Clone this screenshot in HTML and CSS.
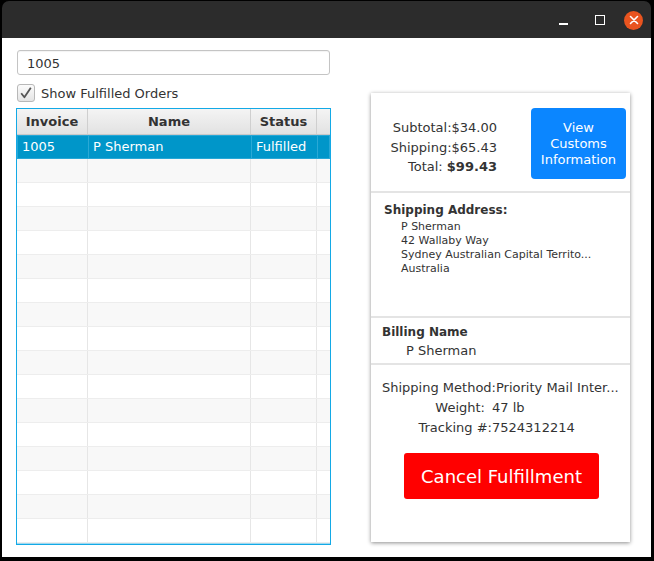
FILE: index.html
```html
<!DOCTYPE html>
<html>
<head>
<meta charset="utf-8">
<link rel="stylesheet" href="styles.css">
</head>
<body>
<div class="window">
  <div class="titlebar">
    <span class="ctl-min"></span>
    <span class="ctl-max"></span>
    <span class="ctl-close">
      <svg width="10" height="10" viewBox="0 0 10 10"><path d="M1.5 1.5L8.5 8.5M8.5 1.5L1.5 8.5" stroke="#fff" stroke-width="1.6" stroke-linecap="round"/></svg>
    </span>
  </div>
  <div class="content">
    <div class="left">
      <div class="search">1005</div>
      <div class="check-row">
        <span class="checkbox">
          <svg width="16" height="16" viewBox="0 0 16 16"><path d="M3.2 8.2L6.4 12.2L12.8 2.8" fill="none" stroke="#555" stroke-width="1.8" stroke-linejoin="round"/></svg>
        </span>
        <span class="check-label">Show Fulfilled Orders</span>
      </div>
      <div class="table">
        <div class="thead">
          <div class="th c1">Invoice</div>
          <div class="th c2">Name</div>
          <div class="th c3">Status</div>
          <div class="th c4"></div>
        </div>
        <div class="tbody">
          <div class="tr selected"><div class="td c1">1005</div><div class="td c2">P Sherman</div><div class="td c3">Fulfilled</div><div class="td c4"></div></div>
          <div class="tr odd"><div class="td c1"></div><div class="td c2"></div><div class="td c3"></div><div class="td c4"></div></div>
          <div class="tr"><div class="td c1"></div><div class="td c2"></div><div class="td c3"></div><div class="td c4"></div></div>
          <div class="tr odd"><div class="td c1"></div><div class="td c2"></div><div class="td c3"></div><div class="td c4"></div></div>
          <div class="tr"><div class="td c1"></div><div class="td c2"></div><div class="td c3"></div><div class="td c4"></div></div>
          <div class="tr odd"><div class="td c1"></div><div class="td c2"></div><div class="td c3"></div><div class="td c4"></div></div>
          <div class="tr"><div class="td c1"></div><div class="td c2"></div><div class="td c3"></div><div class="td c4"></div></div>
          <div class="tr odd"><div class="td c1"></div><div class="td c2"></div><div class="td c3"></div><div class="td c4"></div></div>
          <div class="tr"><div class="td c1"></div><div class="td c2"></div><div class="td c3"></div><div class="td c4"></div></div>
          <div class="tr odd"><div class="td c1"></div><div class="td c2"></div><div class="td c3"></div><div class="td c4"></div></div>
          <div class="tr"><div class="td c1"></div><div class="td c2"></div><div class="td c3"></div><div class="td c4"></div></div>
          <div class="tr odd"><div class="td c1"></div><div class="td c2"></div><div class="td c3"></div><div class="td c4"></div></div>
          <div class="tr"><div class="td c1"></div><div class="td c2"></div><div class="td c3"></div><div class="td c4"></div></div>
          <div class="tr odd"><div class="td c1"></div><div class="td c2"></div><div class="td c3"></div><div class="td c4"></div></div>
          <div class="tr"><div class="td c1"></div><div class="td c2"></div><div class="td c3"></div><div class="td c4"></div></div>
          <div class="tr odd"><div class="td c1"></div><div class="td c2"></div><div class="td c3"></div><div class="td c4"></div></div>
          <div class="tr"><div class="td c1"></div><div class="td c2"></div><div class="td c3"></div><div class="td c4"></div></div>
        </div>
      </div>
    </div>
    <div class="card">
      <div class="sec sec-totals">
        <div class="totals">
          <div>Subtotal:$34.00</div>
          <div>Shipping:$65.43</div>
          <div>Total: <b>$99.43</b></div>
        </div>
        <div class="btn-customs">View<br>Customs<br>Information</div>
      </div>
      <div class="sec sec-address">
        <div class="sec-title">Shipping Address:</div>
        <div class="address">
          <div>P Sherman</div>
          <div>42 Wallaby Way</div>
          <div>Sydney Australian Capital Territo...</div>
          <div>Australia</div>
        </div>
      </div>
      <div class="sec sec-billing">
        <div class="sec-title">Billing Name</div>
        <div class="billing-name">P Sherman</div>
      </div>
      <div class="sec sec-meta">
        <div class="meta-row"><span class="m-label m-ship">Shipping Method:</span><span class="m-value">Priority Mail Inter...</span></div>
        <div class="meta-row"><span class="m-label m-weight">Weight:</span><span class="m-value m-weight-v">47 lb</span></div>
        <div class="meta-row"><span class="m-label m-track">Tracking #:</span><span class="m-value m-track-v">7524312214</span></div>
        <div class="btn-cancel">Cancel Fulfillment</div>
      </div>
    </div>
  </div>
</div>
</body>
</html>
```
FILE: styles.css
```css
* { box-sizing: border-box; }
html, body { margin: 0; padding: 0; background: #000; }
body { font-family: "DejaVu Sans", "Liberation Sans", sans-serif; font-size: 13px; color: #333; }

.window {
  width: 654px; height: 561px;
  background: #000;
  padding: 1px 3px 4px 2px;
  display: flex; flex-direction: column;
}
.titlebar {
  height: 37px; flex: none;
  background: #2c2c2c;
  border-radius: 7px 7px 0 0;
  display: flex; align-items: center; justify-content: flex-end;
  padding-right: 8px;
}
.ctl-min { width: 9px; height: 2px; background: #fff; margin-top: 9px; margin-right: 27px; }
.ctl-max { width: 10px; height: 10px; border: 1.5px solid #fff; margin-right: 19px; margin-top: 1px; }
.ctl-close {
  width: 19px; height: 19px; border-radius: 50%;
  background: #e9541f;
  display: flex; align-items: center; justify-content: center;
  margin-top: 1px;
}
.ctl-close svg { display: block; }

.content {
  flex: 1;
  background: #fff;
  display: flex; align-items: flex-start;
  padding: 12px 21px 0 14px;
}
.left { width: 315px; flex: none; }
.search {
  margin-left: 1px; width: 313px; height: 25px;
  border: 1px solid #c4c4c4; border-radius: 3px;
  box-shadow: inset 0 1px 1px rgba(0,0,0,0.05);
  padding: 1px 0 0 9px; line-height: 23px; font-size: 13px; color: #333;
}
.check-row { margin-top: 9px; margin-left: 1px; height: 18px; display: flex; align-items: center; }
.checkbox {
  width: 18px; height: 18px; border: 1px solid #b8b8b8; border-radius: 3px;
  background: linear-gradient(#fbfbfb, #e4e4e4);
  display: flex; align-items: center; justify-content: center;
}
.checkbox svg { display: block; }
.check-label { margin-left: 6px; font-size: 13px; color: #333; }

.table {
  margin-top: 6px; width: 315px; height: 437px;
  border: 1px solid #13a9e6;
  box-shadow: inset 0 0 0 1px #9fd9f0;
  overflow: hidden;
  background: #fff;
}
.thead { display: flex; height: 26px; background: linear-gradient(#f4f4f4, #e2e2e2); border-bottom: 1px solid #c9c9c9; }
.th { font-weight: bold; text-align: center; line-height: 26px; border-right: 1px solid #cfcfcf; color: #333; }
.c1 { width: 71px; flex: none; }
.c2 { width: 163px; flex: none; }
.c3 { width: 66px; flex: none; }
.c4 { flex: 1; }
.th.c4 { border-right: none; }
.tr { display: flex; height: 24px; border-bottom: 1px solid #ededed; background: #fff; }
.tr.odd { background: #f8f8f8; }
.td { border-right: 1px solid #e6e6e6; line-height: 23px; padding-left: 5px; white-space: nowrap; }
.td.c4 { border-right: none; }
.tr.selected { background: #0096c9; color: #fff; border: 1px solid #27a7d6; }
.tr.selected .td { border-right-color: #2aa9d6; line-height: 21px; padding-left: 4px; }

.card {
  margin-top: 43px; margin-left: 40px;
  width: 259px; height: 449px; flex: none;
  background: #fff;
  box-shadow: 0 1px 4px rgba(0,0,0,0.45);
}
.sec { border-bottom: 2px solid #e4e4e4; }
.sec-totals { height: 100px; display: flex; align-items: flex-start; padding-top: 15px; }
.totals { width: 126px; text-align: right; margin-top: 10px; line-height: 19.5px; font-size: 13px; }
.totals b { font-weight: bold; }
.btn-customs {
  margin-left: 34px; width: 95px; height: 71px;
  background: #0b86ff; color: #fff; border-radius: 4px;
  text-align: center; font-size: 13px; line-height: 16px;
  display: flex; align-items: center; justify-content: center;
}
.sec-address { height: 125px; padding: 10px 0 0 13px; }
.sec-title { font-weight: bold; font-size: 12px; line-height: 15px; }
.address { margin-top: 2px; padding-left: 17px; font-size: 11px; line-height: 14px; }
.sec-billing { height: 47px; padding: 7px 0 0 11px; }
.billing-name { margin-top: 2px; padding-left: 24px; font-size: 13px; line-height: 17px; }
.sec-meta { border-bottom: none; padding-top: 13px; }
.meta-row { display: flex; line-height: 20px; font-size: 13px; white-space: nowrap; }
.m-label { text-align: right; flex: none; }
.m-ship { width: 125px; }
.m-weight { width: 114px; }
.m-track { width: 121px; }
.m-weight-v { margin-left: 7px; }
.m-track-v { margin-left: 0; }
.btn-cancel {
  margin: 15px 0 0 33px; width: 195px; height: 46px;
  background: #ff0000; color: #fff; border-radius: 3px;
  font-size: 18px; display: flex; align-items: center; justify-content: center;
}
```
